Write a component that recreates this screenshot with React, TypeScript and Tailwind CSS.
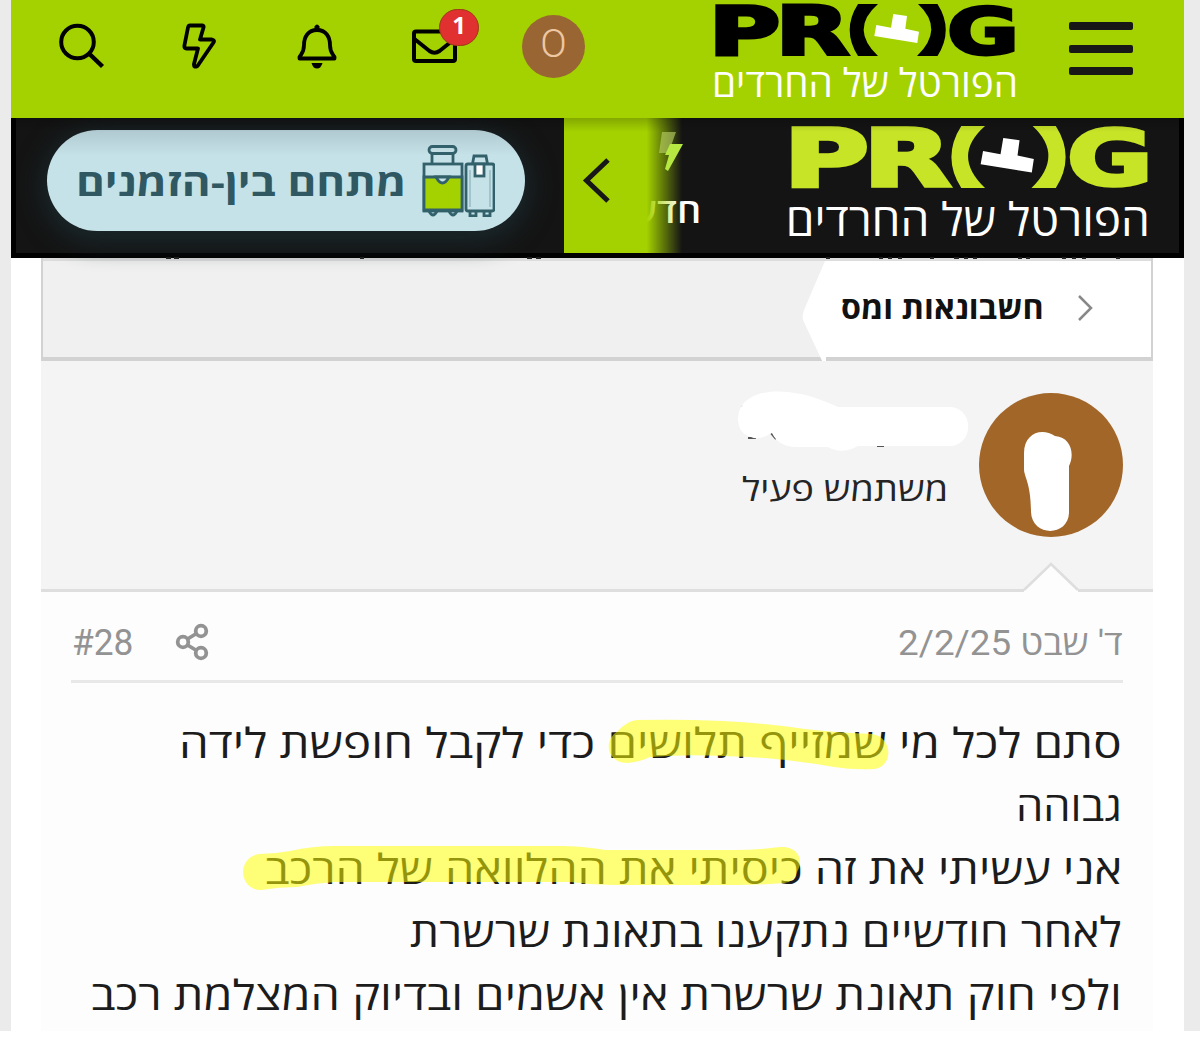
import { useLayoutEffect, useRef, useState } from "react";
import type { ReactNode } from "react";

/* A single line of text stretched or narrowed to an exact width. */
function FitText({ width, className = "", children, dir = "rtl" }: { width: number; className?: string; children: ReactNode; dir?: "rtl" | "ltr" }) {
  const ref = useRef<HTMLSpanElement>(null);
  const [scale, setScale] = useState(1);
  useLayoutEffect(() => {
    if (ref.current) setScale(width / ref.current.offsetWidth);
  }, [width]);
  return (
    <div dir={dir} className={`shrink-0 whitespace-nowrap ${className}`} style={{ width }}>
      <span
        ref={ref}
        className={dir === "rtl" ? "inline-block origin-right" : "inline-block origin-left"}
        style={{ transform: `scaleX(${scale})` }}
      >
        {children}
      </span>
    </div>
  );
}

function ProgLogo({ className }: { className: string }) {
  const letter = {
    fontFamily: "DejaVu Sans",
    fontWeight: 700,
    fontSize: 67,
    lengthAdjust: "spacingAndGlyphs" as const,
    stroke: "currentColor",
    strokeWidth: 3,
  };
  return (
    <svg viewBox="0 0 301 52" preserveAspectRatio="none" className={className} fill="currentColor">
      <text x="-5.500" y="50.500" textLength="72" {...letter}>P</text>
      <text x="61.500" y="50.500" textLength="74" {...letter}>R</text>
      <path d="M144 0H164Q135.400 25 164 52H144Q127.400 26 144 0Z" />
      <path d="M204 0H223.500Q240 26 223.500 52H203Q231 25 204 0Z" />
      <text x="233" y="49.700" textLength="72" {...letter} fontSize={64.5}>G</text>
      <path fill="#fff" d="M179.300 10L193 12L191.300 24.700L205 27.700L203.300 39L160.300 32L162.300 21L177 23.700Z" />
    </svg>
  );
}

function TopBar() {
  return (
    <header className="relative z-20 flex h-[118px] items-start bg-[#a4d200] text-black">
      <svg viewBox="0 0 46 46" className="mt-[23px] ml-[48px] h-[46px] w-[46px]" fill="none" stroke="currentColor" strokeWidth="4">
        <circle cx="18.500" cy="19" r="16.300" />
        <path d="M30.500 31L43.500 43.500" strokeWidth="4.500" />
      </svg>
      <svg viewBox="0 0 35 46" className="mt-[23px] ml-[77px] h-[46px] w-[35px]" fill="none" stroke="currentColor" strokeWidth="3.800" strokeLinejoin="round">
        <path d="M8 2.500H20.500Q22 2.500 21.500 4.500L18 16.500H30Q33 17 31.500 19.500L15.500 43Q11.500 45 12 41L16 25.500H4Q2 25 2.500 22L6 4.500Q6.500 2.500 8 2.500Z" />
      </svg>
      <svg viewBox="0 0 40 46" className="mt-[23px] ml-[80px] h-[46px] w-[40px]" fill="none" stroke="currentColor" strokeWidth="3.800" strokeLinejoin="round">
        <path d="M20 7C11 7 7 14 7 22C7 29 5 30 2.500 34V35.500H37.500V34C35 30 33 29 33 22C33 14 29 7 20 7Z" />
        <path d="M17.500 7V3.500Q20 -.5 22.500 3.500V7Z" fill="currentColor" stroke="none" />
        <path d="M14.500 40H25.500Q24 45.500 20 45.500T14.500 40Z" fill="currentColor" stroke="none" />
      </svg>
      <div className="relative mt-[29px] ml-[75px] h-[34px] w-[45px]">
        <svg viewBox="0 0 45 34" className="h-full w-full" fill="none" stroke="currentColor" strokeWidth="4">
          <rect x="2" y="2.500" width="41" height="29.500" rx="2" />
          <path d="M2.500 10L17.500 22Q22.500 25.500 27.500 22L42.500 10" />
        </svg>
        <span className="absolute -top-[20px] left-[27px] flex h-[37px] w-[40px] items-center justify-center rounded-full border border-[#9b3c14] bg-[#e03030] pb-[5px] font-['Open_Sans',sans-serif] text-[24px] font-bold leading-none text-white">
          1
        </span>
      </div>
      <div className="mt-[15px] ml-[65px] flex h-[63px] w-[63px] items-center justify-center rounded-full bg-[#996633] pb-[5px] font-[Roboto,sans-serif] text-[39px] font-light leading-none text-[#eec8a4]">
        O
      </div>
      <div className="ml-[128px] flex w-[303px] flex-col">
        <ProgLogo className="mt-[4px] ml-px h-[52px] w-[301px] overflow-visible" />
        <FitText width={306} className="mt-[4px] -ml-px font-['Open_Sans',sans-serif] text-[39px] font-medium leading-[44px] text-white">
          הפורטל של החרדים
        </FitText>
      </div>
      <div className="mt-[22px] ml-[53px] flex w-[64px] flex-col gap-[14.500px]">
        <span className="h-[8px] rounded-[2px] bg-[#171717]" />
        <span className="h-[8px] rounded-[2px] bg-[#171717]" />
        <span className="h-[8px] rounded-[2px] bg-[#171717]" />
      </div>
    </header>
  );
}

function Luggage() {
  return (
    <svg viewBox="0 0 73 72" className="h-[72px] w-[73px] shrink-0" fill="none" stroke="#32606b" strokeWidth="2.800">
      <path d="M10 8V19M31 8V19" />
      <rect x="7" y="1.500" width="27" height="7" rx="3.500" />
      <rect x="2" y="19" width="38" height="47" />
      <path d="M2 32H40V65H2Z" fill="#a4d200" />
      <path d="M14 32Q20.500 44 27 32Z" fill="#c5e2e8" />
      <path d="M7 66Q11 74 15 66M27 66Q31 74 35 66" />
      <path d="M50.500 19L52 11H64L65.500 19" />
      <rect x="44" y="19" width="28" height="47" rx="2" />
      <rect x="53" y="19" width="9" height="12" fill="#fff" />
      <path d="M48 25V62M68 25V62" strokeWidth=".8" opacity=".6" />
      <path d="M48 66V71H54V66M62 66V71H68V66" />
    </svg>
  );
}

function Banner() {
  return (
    <div className="relative z-10 flex h-[140px] items-start border-[5px] border-t-0 border-black bg-[#141414]">
      <div className="mt-[12px] ml-[31px] flex h-[101px] w-[478px] items-center justify-end rounded-full bg-linear-to-b from-[#b0c9d0] via-[#c5e2e8] via-25% to-[#c5e2e8] pr-[30px] shadow-[0_6px_24px_6px_#1a272b]">
        <FitText width={330} className="mr-[16px] font-['Open_Sans',sans-serif] text-[38px] font-bold leading-[50px] text-[#2f5862]">
          מתחם בין-הזמנים
        </FitText>
        <Luggage />
      </div>
      <div className="relative ml-[39px] h-[135px] w-[137px] overflow-hidden">
        <div className="absolute right-0 top-[67px]">
          <FitText width={72} className="font-['Open_Sans',sans-serif] text-[34px] font-semibold leading-[50px] text-white">
            חדש
          </FitText>
        </div>
        <div className="absolute inset-y-0 left-0 w-[118px] bg-linear-to-r from-[#a4d200] from-70% to-transparent" />
        <svg viewBox="0 0 137 135" className="absolute inset-0 h-full w-full" fill="none">
          <path d="M98 14H112L107 28L103 35H95Z" fill="#b5cc62" opacity=".65" />
          <path d="M106 26H119L104 53L101 51L105 37H101Z" fill="#b5e840" />
          <path d="M44 42L22.500 62.500L44 83" stroke="#171717" strokeWidth="5" />
        </svg>
      </div>
      <div className="ml-[86px] flex w-[362px] flex-col">
        <ProgLogo className="mt-[8px] ml-[3px] h-[62px] w-[358px] overflow-visible text-[#c8e427]" />
        <FitText width={364} className="mt-[3px] -ml-px font-['Open_Sans',sans-serif] text-[46px] font-medium leading-[54px] text-white">
          הפורטל של החרדים
        </FitText>
      </div>
      <div className="absolute inset-x-0 top-0 h-[14px] bg-linear-to-b from-black/20 to-transparent" />
      <svg viewBox="0 0 1163 3" className="absolute left-0 -bottom-[7px] h-[3px] w-[1163px]" fill="#222">
        <path d="M150 0h5v2h-5zM158 0h5v2h-5zM344 0h4v2h-4zM511 0h5v2h-5zM520 0h5v2h-5zM810 0h4v2h-4zM863 0h4v2h-4zM872 0h4v2h-4zM882 0h4v2h-4zM914 0h4v2h-4zM938 0h5v2h-5zM948 0h4v2h-4zM957 0h4v2h-4zM1002 0h4v2h-4zM1010 0h4v2h-4zM1046 0h4v2h-4zM1056 0h4v2h-4zM1066 0h4v2h-4zM1100 0h4v2h-4z" />
      </svg>
    </div>
  );
}

function Breadcrumb() {
  return (
    <div className="relative flex h-[103px] justify-end border-2 border-t-0 border-b-4 border-[#d2d2d2] bg-[#f0f0f0]">
      <div className="absolute inset-x-0 top-0 h-[3px] bg-[#dcdcdc]" />
      <svg viewBox="0 0 350 107" className="absolute top-0 right-0 h-[107px] w-[350px]">
        <path d="M24 3H350V99H25V107H23L2 62Q1 57 3 52Z" fill="#fff" />
      </svg>
      <div className="relative flex items-start pr-[58px]">
        <FitText width={203} className="mt-[24px] mr-[33px] font-['Open_Sans',sans-serif] text-[31px] font-bold leading-[50px] text-[#111]">
          חשבונאות ומס
        </FitText>
        <svg viewBox="0 0 16 28" className="mt-[36px] h-[28px] w-[16px]" fill="none" stroke="#888" strokeWidth="2.500">
          <path d="M2 2L14 14L2 26" />
        </svg>
      </div>
    </div>
  );
}

function UserPanel() {
  return (
    <div className="relative flex h-[231px] justify-end border-b-[3px] border-[#dedede] bg-[#f4f4f4] pr-[30px]">
      <div className="relative mr-[31px] pt-[103px]">
        <FitText width={206} className="ml-px font-['Open_Sans',sans-serif] text-[33px] font-medium leading-[50px] text-[#252525]">
          משתמש פעיל
        </FitText>
        <svg viewBox="735 385 235 70" className="absolute top-[24px] -left-[5px] h-[70px] w-[235px]">
          <path d="M741 407l5-4M747 438h8M770 433l5 6M876 446h7" stroke="#555" strokeWidth="2" />
          <path d="M737 420C737 397 760 391 778 391.500C803 392 821 400 837 407H950C973 409 973 444 950 446H857Q841 455 827 447H800C780 448 774 439 771 433Q757 441 750 437Q738 434 737 420Z" fill="#fff" />
        </svg>
      </div>
      <div className="mt-[32px] h-[144px] w-[144px] rounded-full bg-[#a26629]">
        <svg viewBox="0 0 144 144" className="h-full w-full" fill="#fff">
          <path d="M45 60C45 41 62 34 76 43C92 44 96 61 90 73V120C89 144 53 144 52 119C52 90 45 84 45 76Z" />
        </svg>
      </div>
      <svg viewBox="0 0 56 31" className="absolute right-[74px] -bottom-[4px] h-[31px] w-[56px]">
        <path d="M1 28L28 2L55 28V31H1Z" fill="#fdfdfd" />
        <path d="M1 28L28 2L55 28" fill="none" stroke="#dedede" strokeWidth="2.500" />
      </svg>
    </div>
  );
}

const POST_LINES = [
  { text: "סתם לכל מי שמזייף תלושים כדי לקבל חופשת לידה", width: 943 },
  { text: "גבוהה", width: 106 },
  { text: "אני עשיתי את זה כיסיתי את ההלוואה של הרכב", width: 857 },
  { text: "לאחר חודשיים נתקענו בתאונת שרשרת", width: 712 },
  { text: "ולפי חוק תאונת שרשרת אין אשמים ובדיוק המצלמת רכב", width: 1031 },
];

function Post() {
  return (
    <article className="relative flex h-[439px] flex-col bg-[#fdfdfd] px-[30px]">
      <div className="flex h-[91px] items-start justify-between border-b-[3px] border-[#e8e8e8] text-[#939393]">
        <div className="flex items-start gap-[42px] pl-px">
          <FitText dir="ltr" width={61} className="mt-[26px] font-[Roboto,sans-serif] text-[37px] leading-[50px]">
            #28
          </FitText>
          <svg viewBox="0 0 34 38" className="mt-[31px] h-[38px] w-[34px]" fill="none" stroke="currentColor" strokeWidth="3.800">
            <circle cx="8" cy="19" r="5.300" />
            <circle cx="26" cy="8" r="5.300" />
            <circle cx="26" cy="30" r="5.300" />
            <path d="M12.500 16L21.500 10.500M12.500 22L21.500 27.500" />
          </svg>
        </div>
        <FitText width={225} className="mt-[27px] font-[Roboto,'Open_Sans',sans-serif] text-[35px] leading-[50px]">
          ד' שבט 2/2/25
        </FitText>
      </div>
      <div className="flex flex-col items-end pt-[28px] pr-px">
        {POST_LINES.map((line) => (
          <FitText key={line.text} width={line.width} className="h-[63px] font-['Open_Sans',sans-serif] text-[41px] font-medium leading-[63px] text-[#1c1c1c]">
            {line.text}
          </FitText>
        ))}
      </div>
      <svg viewBox="41 592 1112 439" className="pointer-events-none absolute inset-0 h-full w-full" fill="#ffff00" fillOpacity=".53">
        <path d="M637 720Q680 719 723 721Q765 723 805 729Q840 733 872 734C894 738 893 767 874 769Q853 770 834 767Q780 757 723 756Q687 754 650 757Q640 762 627 763C605 762 604 739 618 731Q627 721 637 720Z" />
        <path d="M259 854Q274 854 290 851Q313 846 335 846H560Q582 846 605 850H735Q759 850 780 847C799 846 804 861 797 872Q793 883 784 883Q760 885 735 885H613Q592 885 571 882H335Q316 883 297 887Q279 887 261 890C239 890 236 858 259 854Z" />
      </svg>
    </article>
  );
}

export default function App() {
  return (
    <div className="h-[1059px] w-[1200px] overflow-hidden bg-white">
      <div className="h-[1031px] bg-[#ebebeb] pr-[16px] pl-[11px]">
        <div className="h-full bg-white">
          <TopBar />
          <Banner />
          <main className="mr-[31px] ml-[30px]">
            <Breadcrumb />
            <UserPanel />
            <Post />
          </main>
        </div>
      </div>
    </div>
  );
}
